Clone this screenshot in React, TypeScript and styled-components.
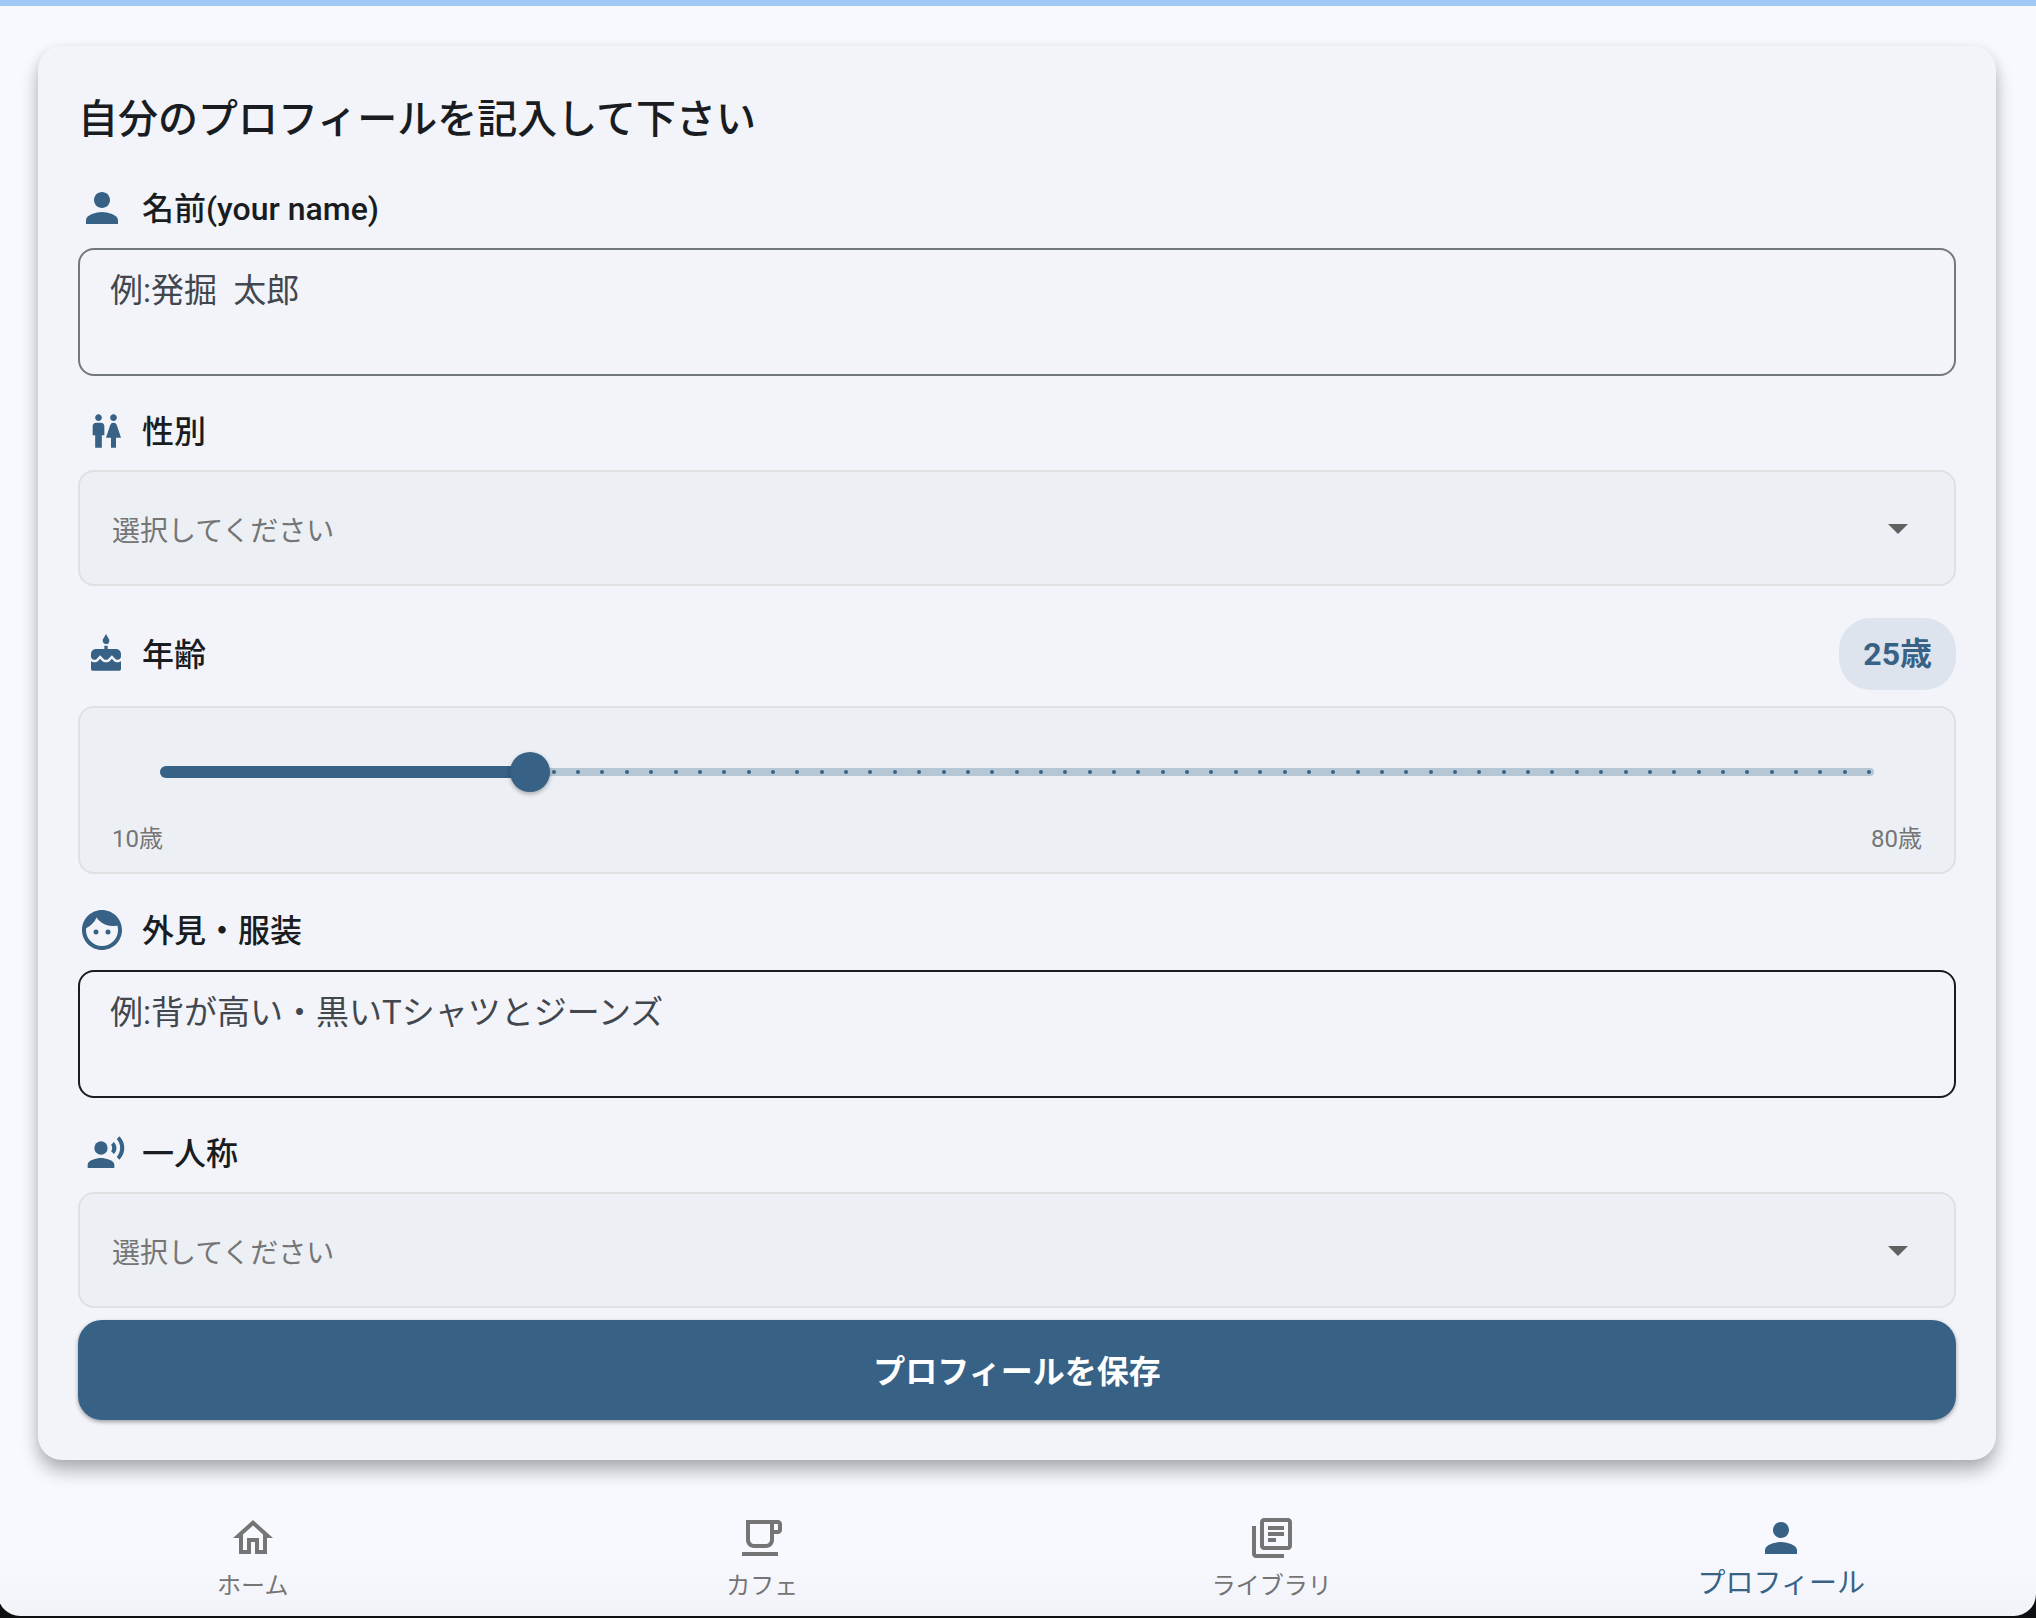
import React, { useState } from "react";
import styled, { createGlobalStyle } from "styled-components";
import {
  MdArrowDropDown,
  MdCake,
  MdFace,
  MdOutlineHome,
  MdOutlineLibraryBooks,
  MdOutlineLocalCafe,
  MdPerson,
  MdRecordVoiceOver,
  MdWc,
} from "react-icons/md";

const primary = "#376285";
const ink = "#191c20";
const muted = "#757575";
const fieldFill = "#ecf0f5";
const fieldLine = "#e0e0e0";

const GlobalStyle = createGlobalStyle`
  *, *::before, *::after { box-sizing: border-box; }
  html { background: #0e0f11; }
  body { margin: 0; overflow-x: hidden; }
  body, button, textarea, select, input {
    font-family: Roboto, "Noto Sans CJK JP", sans-serif;
  }
`;

const Shell = styled.div`
  display: flex;
  flex-direction: column;
  min-height: calc(100vh - 2px);
  margin-left: -2px;
  border-top: 6px solid #a0caf5;
  border-radius: 0 0 22px 22px;
  background: linear-gradient(to top, #f2f3f9, #f8f9ff 60px);
`;

const Main = styled.main`
  flex: 1;
  padding: 40px;
`;

const Card = styled.form`
  display: flex;
  flex-direction: column;
  padding: 40px;
  border-radius: 24px;
  background: #f2f4fa;
  box-shadow:
    0 12px 18px -2px rgba(0, 0, 0, 0.18),
    0 10px 20px rgba(0, 0, 0, 0.14),
    0 2px 12px rgba(0, 0, 0, 0.06);
`;

const Title = styled.h1`
  margin: 0 0 32px;
  padding-top: 2px;
  font-size: 40px;
  font-weight: 500;
  line-height: 64px;
  color: ${ink};
`;

const Fields = styled.div`
  display: flex;
  flex-direction: column;
  gap: 32px;
  margin-bottom: 12px;
`;

const Field = styled.div`
  display: flex;
  flex-direction: column;
  gap: 16px;
`;

const FieldHead = styled.div`
  display: flex;
  align-items: center;
  gap: 16px;
`;

const IconSlot = styled.span`
  display: flex;
  justify-content: flex-end;
  width: 48px;
  color: ${primary};
`;

const Label = styled.label`
  padding-top: 2px;
  font-size: 32px;
  font-weight: 500;
  line-height: 44px;
  color: ${ink};
`;

const TextBox = styled.textarea<{ $line: string }>`
  display: block;
  width: 100%;
  padding: 17px 30px 11px;
  border: 2px solid ${(p) => p.$line};
  border-radius: 16px;
  outline: none;
  resize: none;
  background: transparent;
  font-size: 33px;
  line-height: 48px;
  color: ${ink};

  &::placeholder {
    color: #42474e;
    opacity: 1;
  }
`;

const SelectWrap = styled.div`
  display: grid;
  align-items: center;

  > * {
    grid-area: 1 / 1;
  }

  > svg {
    justify-self: end;
    margin-right: 34px;
    color: #616161;
    pointer-events: none;
  }
`;

const SelectBox = styled.select`
  width: 100%;
  height: 116px;
  padding: 6px 90px 0 32px;
  border: 2px solid ${fieldLine};
  border-radius: 16px;
  appearance: none;
  background: ${fieldFill};
  font-size: 28px;
  color: ${muted};
`;

const AgePill = styled.output`
  margin-left: auto;
  padding: 0 24px;
  border-radius: 32px;
  background: #dde4ee;
  font-size: 32px;
  font-weight: 700;
  line-height: 72px;
  color: ${primary};
`;

const SliderPanel = styled.div`
  padding: 16px 32px;
  border: 2px solid ${fieldLine};
  border-radius: 16px;
  background: ${fieldFill};
`;

const SliderStack = styled.div`
  display: grid;
  align-items: center;
  height: 96px;
  padding: 0 48px;

  > * {
    grid-area: 1 / 1;
  }
`;

const Track = styled.div`
  display: flex;
  align-items: center;
  justify-content: space-between;
  height: 8px;
  padding: 0 2px;
  border-radius: 4px;
  background: #b5c6d5;
`;

const Tick = styled.span`
  width: 4px;
  height: 4px;
  border-radius: 50%;
  background: ${primary};
`;

const Filled = styled.div`
  height: 12px;
  border-radius: 6px;
  background: ${primary};
`;

const Range = styled.input`
  height: 96px;
  margin: 0 -16px;
  appearance: none;
  background: transparent;

  &::-webkit-slider-thumb {
    appearance: none;
    width: 40px;
    height: 40px;
    border-radius: 50%;
    background: ${primary};
    box-shadow: 0 2px 4px rgba(0, 0, 0, 0.3);
  }
`;

const RangeEnds = styled.div`
  display: flex;
  justify-content: space-between;
  padding-top: 2px;
  font-size: 24px;
  line-height: 34px;
  color: ${muted};
`;

const SaveButton = styled.button`
  height: 100px;
  padding: 0 24px 2px;
  border: 0;
  border-radius: 24px;
  background: ${primary};
  box-shadow: 0 2px 4px rgba(0, 0, 0, 0.35);
  font-size: 32px;
  font-weight: 700;
  color: #ffffff;
`;

const Nav = styled.nav`
  display: grid;
  grid-template-columns: repeat(4, 1fr);
  padding-bottom: 6px;
`;

const NavLink = styled.a<{ $active?: boolean }>`
  display: flex;
  flex-direction: column;
  align-items: center;
  padding-top: 14px;
  font-size: ${(p) => (p.$active ? 28 : 24)}px;
  line-height: ${(p) => (p.$active ? 44 : 48)}px;
  text-decoration: none;
  color: ${(p) => (p.$active ? primary : muted)};
`;

const MIN_AGE = 10;
const MAX_AGE = 80;

function Choice({ id, options }: { id: string; options: string[] }) {
  return (
    <SelectWrap>
      <SelectBox id={id} defaultValue="">
        <option value="">選択してください</option>
        {options.map((o) => (
          <option key={o}>{o}</option>
        ))}
      </SelectBox>
      <MdArrowDropDown size={48} />
    </SelectWrap>
  );
}

function AgeSlider({ age, onChange }: { age: number; onChange: (n: number) => void }) {
  const steps = MAX_AGE - MIN_AGE;
  const share = (age - MIN_AGE) / steps;
  return (
    <SliderPanel>
      <SliderStack>
        <Track>
          {Array.from({ length: steps + 1 }, (_, i) => (
            <Tick key={i} />
          ))}
        </Track>
        <Filled style={{ width: `calc(4px + (100% - 8px) * ${share})` }} />
        <Range
          id="age"
          type="range"
          min={MIN_AGE}
          max={MAX_AGE}
          value={age}
          onChange={(e) => onChange(Number(e.target.value))}
        />
      </SliderStack>
      <RangeEnds>
        <span>{MIN_AGE}歳</span>
        <span>{MAX_AGE}歳</span>
      </RangeEnds>
    </SliderPanel>
  );
}

export default function App() {
  const [age, setAge] = useState(25);
  return (
    <>
      <GlobalStyle />
      <Shell>
        <Main>
          <Card onSubmit={(e) => e.preventDefault()}>
            <Title>自分のプロフィールを記入して下さい</Title>
            <Fields>
              <Field>
                <FieldHead>
                  <IconSlot><MdPerson size={48} /></IconSlot>
                  <Label htmlFor="name">名前(your name)</Label>
                </FieldHead>
                <TextBox id="name" rows={2} $line="#71787e" placeholder="例:発掘  太郎" />
              </Field>
              <Field>
                <FieldHead>
                  <IconSlot><MdWc size={40} /></IconSlot>
                  <Label htmlFor="gender">性別</Label>
                </FieldHead>
                <Choice id="gender" options={["男性", "女性", "その他"]} />
              </Field>
              <Field>
                <FieldHead>
                  <IconSlot><MdCake size={40} /></IconSlot>
                  <Label htmlFor="age">年齢</Label>
                  <AgePill htmlFor="age">{age}歳</AgePill>
                </FieldHead>
                <AgeSlider age={age} onChange={setAge} />
              </Field>
              <Field>
                <FieldHead>
                  <IconSlot><MdFace size={48} /></IconSlot>
                  <Label htmlFor="looks">外見・服装</Label>
                </FieldHead>
                <TextBox id="looks" rows={2} $line={ink} placeholder="例:背が高い・黒いTシャツとジーンズ" />
              </Field>
              <Field>
                <FieldHead>
                  <IconSlot><MdRecordVoiceOver size={40} /></IconSlot>
                  <Label htmlFor="pronoun">一人称</Label>
                </FieldHead>
                <Choice id="pronoun" options={["私", "僕", "俺"]} />
              </Field>
            </Fields>
            <SaveButton type="submit">プロフィールを保存</SaveButton>
          </Card>
        </Main>
        <Nav>
          <NavLink href="#home"><MdOutlineHome size={48} />ホーム</NavLink>
          <NavLink href="#cafe"><MdOutlineLocalCafe size={48} />カフェ</NavLink>
          <NavLink href="#library"><MdOutlineLibraryBooks size={48} />ライブラリ</NavLink>
          <NavLink href="#profile" $active><MdPerson size={48} />プロフィール</NavLink>
        </Nav>
      </Shell>
    </>
  );
}
